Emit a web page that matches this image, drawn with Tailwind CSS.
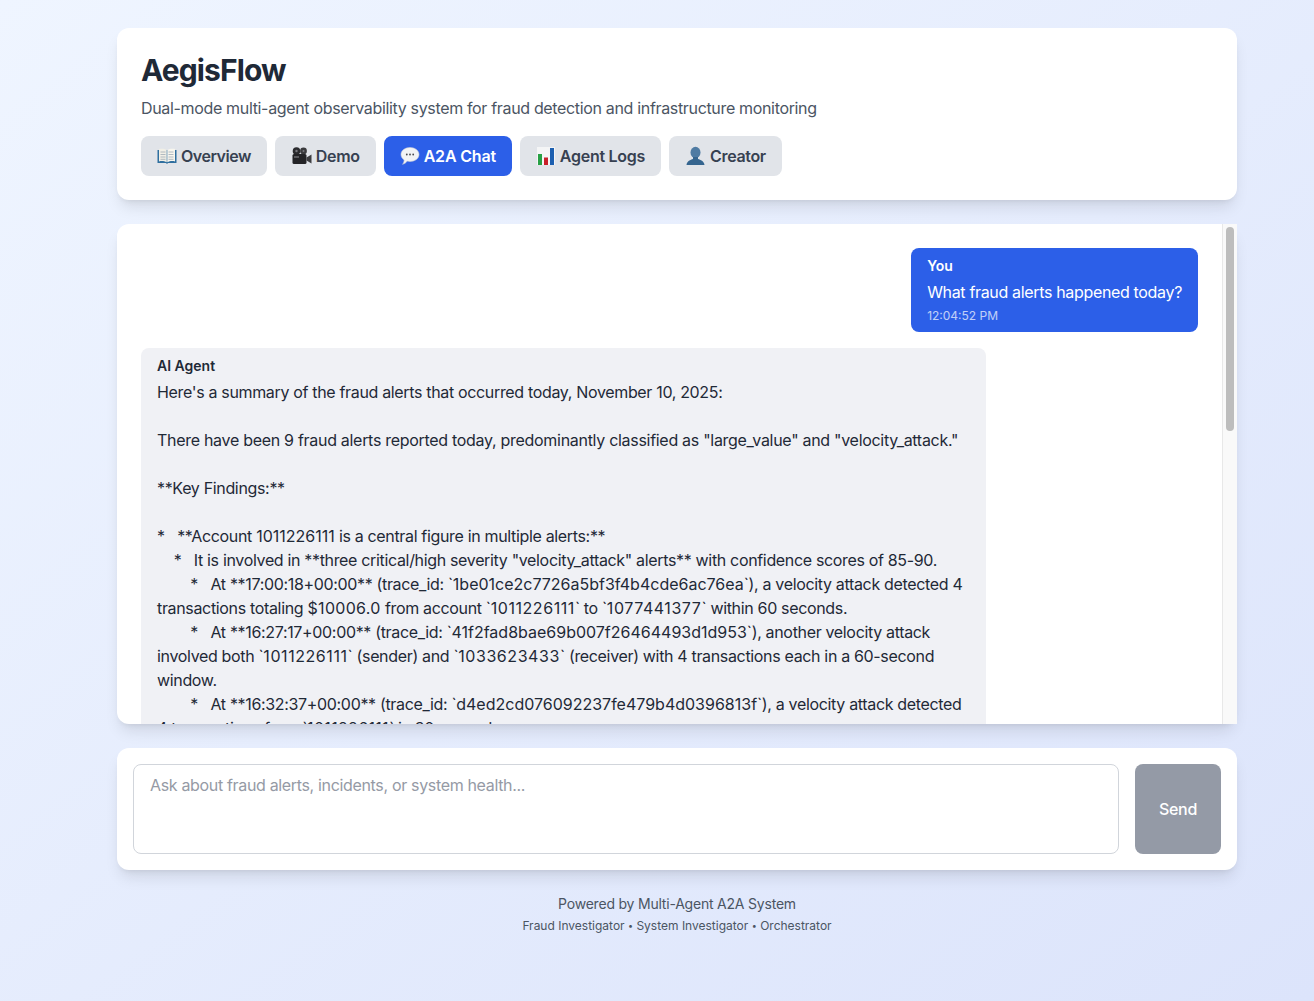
<!DOCTYPE html>
<html lang="en">
<head>
    <meta charset="UTF-8">
    <meta name="viewport" content="width=device-width, initial-scale=1.0">
    <title>AegisFlow</title>
    <script src="https://cdn.jsdelivr.net/npm/@tailwindcss/browser@4"></script>
</head>
<body class="min-h-screen bg-gradient-to-br from-[#eff5ff] to-[#dce4fb] font-['Inter',sans-serif] text-[#1f2937] tracking-[-0.021em]">
    <div class="w-[1120px] ml-[117px] pt-7 pb-[60px] space-y-6">

        <!-- Header -->
        <header class="bg-white rounded-xl shadow-lg p-6">
            <h1 class="text-3xl font-bold mb-2 tracking-[-0.03em]">AegisFlow</h1>
            <p class="text-[#4b5563]">Dual-mode multi-agent observability system for fraud detection and infrastructure monitoring</p>
            <nav class="flex gap-2 mt-4">
                <button class="inline-flex items-center gap-1 px-4 py-2 rounded-lg font-semibold bg-[#e1e4e9] text-[#374151] tracking-[-0.03em]">
                    <svg class="w-5 h-5" viewBox="0 0 20 20">
                        <path d="M0.5 4H19.5V17H11L10 18L9 17H0.5Z" fill="#2f6f9f"/>
                        <path d="M2 3C4.5 2.4 7.5 2.6 9.7 4V16.3C7.5 15 4.5 14.8 2 15.4Z" fill="#f1efe6"/>
                        <path d="M18 3C15.5 2.4 12.5 2.6 10.3 4V16.3C12.5 15 15.5 14.8 18 15.4Z" fill="#f8f6ee"/>
                        <path d="M3.5 6H8.5M3.5 8.5H8.5M3.5 11H8.5M3.5 13.3H8.5M11.5 6H16.5M11.5 8.5H16.5M11.5 11H16.5M11.5 13.3H16.5" stroke="#a9b3bb" stroke-width="0.9"/>
                    </svg>
                    Overview
                </button>
                <button class="inline-flex items-center gap-1 px-4 py-2 rounded-lg font-semibold bg-[#e1e4e9] text-[#374151]">
                    <svg class="w-[21px] h-5" viewBox="0 0 21 20">
                        <circle cx="5.5" cy="5" r="3.8" fill="#2b2b2e"/>
                        <circle cx="12.5" cy="5" r="3.4" fill="#3a3a3d"/>
                        <circle cx="5.5" cy="5" r="1.2" fill="#77777c"/>
                        <circle cx="12.5" cy="5" r="1" fill="#77777c"/>
                        <rect x="1.5" y="8" width="14" height="10" rx="1.5" fill="#232326"/>
                        <path d="M15.5 11.5L20.5 8.5V17.5L15.5 14.5Z" fill="#3d3d40"/>
                        <rect x="3" y="10" width="5" height="2" fill="#5a5a5e"/>
                    </svg>
                    Demo
                </button>
                <button class="inline-flex items-center gap-1 px-4 py-2 rounded-lg font-semibold bg-[#2c5fe8] text-white tracking-[-0.012em]">
                    <svg class="w-5 h-5" viewBox="0 0 20 20">
                        <path d="M10 1.5C15 1.5 19 4.6 19 8.5S15 15.500 10 15.500C9 15.500 8.100 15.400 7.200 15.100C6 16.900 4.200 18 2.500 18.300C3.600 17 4.100 15.600 4.100 13.900C2.200 12.600 1 10.700 1 8.500C1 4.600 5 1.500 10 1.500Z" fill="#f2f3f5" stroke="#c9ccd6" stroke-width="0.6"/>
                        <circle cx="6.800" cy="8.500" r="0.900" fill="#4a4a4f"/>
                        <circle cx="10" cy="8.500" r="0.900" fill="#4a4a4f"/>
                        <circle cx="13.200" cy="8.500" r="0.900" fill="#4a4a4f"/>
                    </svg>
                    A2A Chat
                </button>
                <button class="inline-flex items-center gap-1 px-4 py-2 rounded-lg font-semibold bg-[#e1e4e9] text-[#374151] tracking-[-0.017em]">
                    <svg class="w-5 h-5" viewBox="0 0 20 20">
                        <rect x="1" y="1" width="18" height="18" fill="#f4f5f6"/>
                        <rect x="2" y="8" width="4" height="11" fill="#27a045"/>
                        <rect x="8" y="11.500" width="4" height="7.500" fill="#c8202a"/>
                        <rect x="14" y="2" width="4" height="17" fill="#1c5fb0"/>
                    </svg>
                    Agent Logs
                </button>
                <button class="inline-flex items-center gap-1 px-4 py-2 rounded-lg font-semibold bg-[#e1e4e9] text-[#374151]">
                    <svg class="w-[21px] h-5" viewBox="0 0 21 20">
                        <ellipse cx="10.500" cy="6.500" rx="5" ry="5.800" fill="#4f7ba3"/>
                        <path d="M8 11H13V13C15.500 14 19 14.800 19.500 19H1.500C2 14.800 5.500 14 8 13Z" fill="#35658f"/>
                    </svg>
                    Creator
                </button>
            </nav>
        </header>

        <!-- Messages -->
        <main class="flex bg-white rounded-xl shadow-lg h-[500px]">
            <div class="flex-1 min-w-0 overflow-hidden rounded-l-xl p-6 space-y-4">
                <div class="flex justify-end">
                    <div class="max-w-[80%] rounded-lg bg-[#2c5fe8] text-white px-4 py-2">
                        <div class="text-sm font-semibold mb-1 tracking-normal">You</div>
                        <div class="whitespace-pre-wrap">What fraud alerts happened today?</div>
                        <div class="text-xs mt-1 opacity-70 tracking-normal">12:04:52 PM</div>
                    </div>
                </div>
                <div class="flex justify-start">
                    <div class="w-[845px] rounded-lg bg-[#f0f1f5] px-4 py-2">
                        <div class="text-sm font-semibold mb-1 tracking-normal">AI Agent</div>
                        <div class="whitespace-pre-wrap">Here's a summary of the fraud alerts that occurred today, November 10, 2025:

<span class="tracking-[-0.0185em]">There have been 9 fraud alerts reported today, predominantly classified as "large_value" and "velocity_attack."</span>

**Key Findings:**

*   **Account <span class="tracking-normal">1011226111</span> is a central figure in multiple alerts:**
    *   It is involved in **three critical/high severity "velocity_attack" alerts** with confidence scores of 85-90.
        *   At **17:00:18+00:00** (trace_id: `<span class="tracking-normal">1be01ce2c7726a5bf3f4b4cde6ac76ea</span>`), a velocity attack detected 4 transactions totaling <span class="tracking-[0.02em]">$10006.0</span> from account `<span class="tracking-[0.035em]">1011226111</span>` to `<span class="tracking-[0.035em]">1077441377</span>` within 60 seconds.
        *   At **16:27:17+00:00** (trace_id: `<span class="tracking-normal">41f2fad8bae69b007f26464493d1d953</span>`), another velocity attack involved both `<span class="tracking-[0.035em]">1011226111</span>` (sender) and `<span class="tracking-[0.035em]">1033623433</span>` (receiver) with 4 transactions each in a 60-second window.
        *   At **16:32:37+00:00** (trace_id: `<span class="tracking-normal">d4ed2cd076092237fe479b4d0396813f</span>`), a velocity attack detected 4 transactions from `<span class="tracking-[0.02em]">1011226111</span>` in 30 seconds.</div>
                    </div>
                </div>
            </div>
            <!-- scrollbar -->
            <div class="w-[15px] shrink-0 bg-[#f9f9f9] border-l border-[#e8e8e8] pt-[3px] pl-[3px]">
                <div class="w-2 h-[204px] rounded-full bg-[#bdbdbd]"></div>
            </div>
        </main>

        <!-- Input -->
        <form class="bg-white rounded-xl shadow-lg p-4 flex gap-4">
            <textarea rows="3" placeholder="Ask about fraud alerts, incidents, or system health..." class="flex-1 h-[90px] resize-none rounded-lg border border-[#d1d5db] px-4 py-[10px] text-[16px] leading-[normal] placeholder:text-[#959aa5]"></textarea>
            <button type="button" class="w-[86px] rounded-lg bg-[#949aa6] text-white font-medium">Send</button>
        </form>

        <!-- Footer -->
        <footer class="text-center text-[#4b5563] text-sm">
            <p class="leading-5 tracking-[-0.015em]">Powered by Multi-Agent A2A System</p>
            <p class="text-xs mt-1 tracking-normal">Fraud Investigator <span class="inline-block text-[9px] -translate-y-px">•</span> System Investigator <span class="inline-block text-[9px] -translate-y-px">•</span> Orchestrator</p>
        </footer>
    </div>
</body>
</html>
